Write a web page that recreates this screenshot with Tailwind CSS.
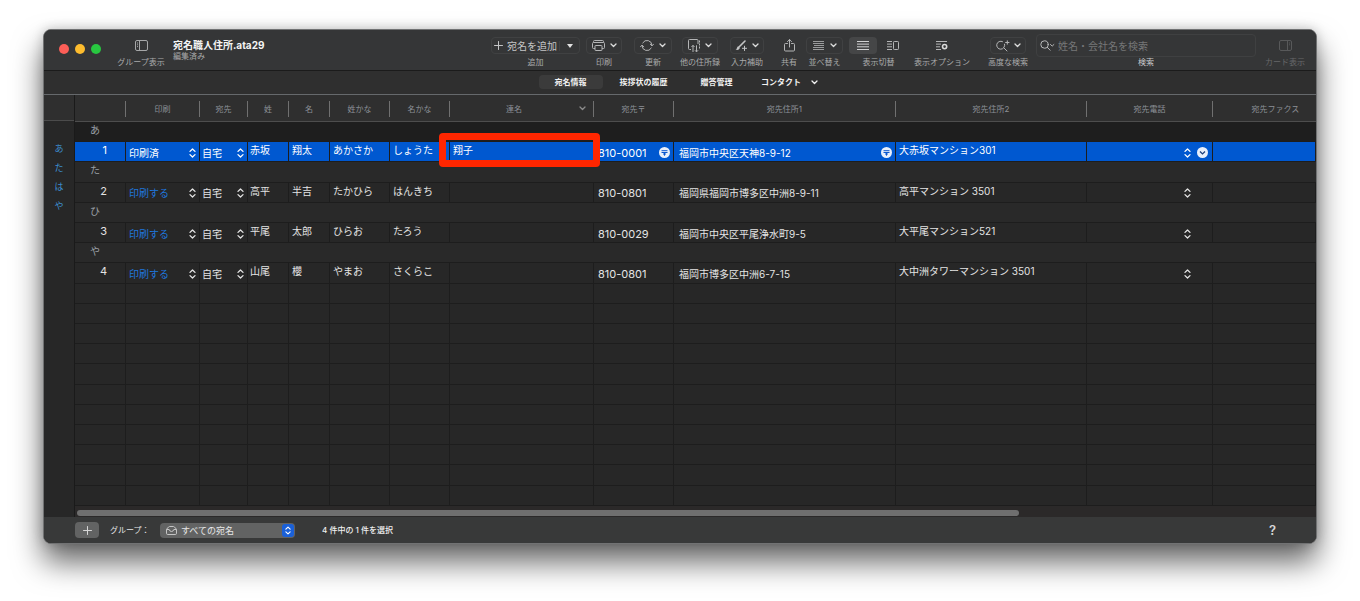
<!DOCTYPE html>
<html lang="ja">
<head>
<meta charset="utf-8">
<meta name="viewport" content="width=device-width, initial-scale=1">
<title>宛名職人住所.ata29</title>
<script src="https://cdn.jsdelivr.net/npm/@tailwindcss/browser@4"></script>
</head>
<body class="flex h-screen flex-col bg-white px-[43px] pt-[29px] pb-[57px] font-['Inter','Noto_Sans_CJK_JP',sans-serif] text-[10px] text-[#e4e4e4]">

<svg class="hidden">
  <symbol id="chev" viewBox="0 0 7 5"><path d="M1 1l2.5 2.5L6 1" fill="none" stroke="currentColor" stroke-width="1.3" stroke-linecap="round" stroke-linejoin="round"/></symbol>
  <symbol id="updown" viewBox="0 0 7 10"><path d="M1 3.4L3.5 1 6 3.4M1 6.6L3.5 9 6 6.6" fill="none" stroke="currentColor" stroke-width="1.3" stroke-linecap="round" stroke-linejoin="round"/></symbol>
</svg>

<div class="flex min-h-0 flex-1 flex-col overflow-hidden rounded-lg border border-[#717273] bg-[#272727] shadow-[0_18px_30px_rgba(0,0,0,0.6),0_0_12px_rgba(0,0,0,0.2)]">

  <header class="flex h-[41px] shrink-0 items-end border-b border-[#1b1b1b] bg-[#353637] pr-[11px] pb-[3px] pl-[15px] text-[8px] leading-[10px] text-[#a9aaab]">
    <div class="flex h-[23px] items-start gap-[6px]">
      <button aria-label="閉じる" class="size-[10px] rounded-full bg-[#fc5e57]"></button>
      <button aria-label="しまう" class="size-[10px] rounded-full bg-[#fdbc2e]"></button>
      <button aria-label="拡大" class="size-[10px] rounded-full bg-[#28c740]"></button>
    </div>
    <button class="ml-4 flex w-12 flex-col items-center gap-[3px] whitespace-nowrap">
      <span class="flex h-[17px] items-center"><svg class="h-[11px] w-[13px]" viewBox="0 0 13 11" fill="none" stroke="#a6a7a8"><rect x=".5" y=".5" width="12" height="10" rx="1.5"/><path d="M4.5.5v10M2 3h1M2 4.8h1M2 6.6h1"/></svg></span>
      グループ表示
    </button>
    <div class="ml-2 w-[318px] pb-[5px]">
      <h1 class="text-[10px] leading-3 font-bold whitespace-nowrap text-[#f4f4f4]">宛名職人住所.ata29</h1>
      <p class="leading-[11px]">編集済み</p>
    </div>

    <div class="flex w-[89px] flex-col items-center gap-[3px]">
      <div class="flex h-[17px] w-full items-center rounded border border-[#404142] text-[10px] text-[#c4c5c6]">
        <button class="flex flex-1 items-center justify-center gap-1 border-r border-[#404142] whitespace-nowrap">
          <svg class="size-[9px]" viewBox="0 0 9 9" stroke="currentColor" stroke-linecap="round"><path d="M4.5.5v8M.5 4.5h8"/></svg>宛名を追加
        </button>
        <button aria-label="追加メニュー" class="flex w-[19px] justify-center"><svg class="h-1 w-[6px]" viewBox="0 0 6 4" fill="#e2e2e2"><path d="M0 0h6L3 4z"/></svg></button>
      </div>
      追加
    </div>
    <button class="ml-[6px] flex w-9 flex-col items-center gap-[3px]">
      <span class="flex h-[17px] w-full items-center justify-center gap-[5px] rounded border border-[#404142]">
        <svg class="h-[11px] w-[13px]" viewBox="0 0 13 11" fill="none" stroke="#b4b5b6"><path d="M1.5 2.500V1.500a1 1 0 0 1 1-1h8a1 1 0 0 1 1 1v1M3 8.500H1.500a1 1 0 0 1-1-1V3.500a1 1 0 0 1 1-1h10a1 1 0 0 1 1 1v4a1 1 0 0 1-1 1H10"/><rect x="3" y="5.500" width="7" height="5" rx=".6"/></svg>
        <svg class="h-[5px] w-[7px] text-[#dcdcdc]"><use href="#chev"/></svg>
      </span>
      印刷
    </button>
    <button class="ml-3 flex w-[38px] flex-col items-center gap-[3px]">
      <span class="flex h-[17px] w-full items-center justify-center gap-[5px] rounded border border-[#404142]">
        <svg class="h-[13px] w-[14px]" viewBox="0 0 14 13" fill="none" stroke="#b4b5b6" stroke-linecap="round" stroke-linejoin="round"><path d="M2.700 3.900A5 5 0 0 1 12 6.500M11.300 9.100A5 5 0 0 1 2 6.500"/><path d="M10.300 5.200L12 6.900l1.500-1.700M.5 7.800L2 6.100l1.700 1.700"/></svg>
        <svg class="h-[5px] w-[7px] text-[#dcdcdc]"><use href="#chev"/></svg>
      </span>
      更新
    </button>
    <button class="ml-2 flex w-10 flex-col items-center gap-[3px] whitespace-nowrap">
      <span class="flex h-[17px] w-[36px] items-center justify-center gap-[5px] rounded border border-[#404142]">
        <svg class="h-[14px] w-3" viewBox="0 0 12 14" fill="none" stroke="#b4b5b6" stroke-linejoin="round"><path d="M3 10.500H1.500a1 1 0 0 1-1-1v-8a1 1 0 0 1 1-1h7.500a1 1 0 0 1 1 1V5"/><path d="M11.500 1.500v2M11.500 4.500v2M11.500 7.500v2M5 13V6.500M3.500 8L5 6.300 6.500 8M8.500 6.300v6.400M7 11.300l1.500 1.600 1.500-1.600"/></svg>
        <svg class="h-[5px] w-[7px] text-[#dcdcdc]"><use href="#chev"/></svg>
      </span>
      他の住所録
    </button>
    <button class="ml-[10px] flex w-[34px] flex-col items-center gap-[3px] whitespace-nowrap">
      <span class="flex h-[17px] w-full items-center justify-center gap-[5px] rounded border border-[#404142]">
        <svg class="h-[11px] w-3" viewBox="0 0 12 11" fill="none" stroke="#c4c5c6" stroke-linecap="round"><path d="M10 1L4.500 6.500" stroke-width="1.600"/><path d="M3.600 6.300c-1.400.2-1.500 1.500-1.800 2.200-.3.700-.8 1-1.300 1 1.800.9 4.300.4 4.300-1.900z" fill="#c4c5c6" stroke="none"/><path d="M9.500 6.200v4.300M7.400 8.300h4.200"/></svg>
        <svg class="h-[5px] w-[7px] text-[#dcdcdc]"><use href="#chev"/></svg>
      </span>
      入力補助
    </button>
    <button class="ml-[17px] flex w-4 flex-col items-center gap-[3px] whitespace-nowrap">
      <span class="flex h-[17px] items-center"><svg class="h-[13px] w-[11px]" viewBox="0 0 11 13" fill="none" stroke="#b4b5b6" stroke-linecap="round" stroke-linejoin="round"><path d="M3.500 4.500h-2a1 1 0 0 0-1 1v5.500a1 1 0 0 0 1 1h8a1 1 0 0 0 1-1V5.500a1 1 0 0 0-1-1h-2M5.500 8V.7M3.500 2.600l2-2 2 2"/></svg></span>
      共有
    </button>
    <button class="ml-[9px] flex w-[37px] flex-col items-center gap-[3px] whitespace-nowrap">
      <span class="flex h-[17px] w-full items-center justify-center gap-[6px] rounded border border-[#404142]">
        <svg class="h-[9px] w-[11px]" viewBox="0 0 11 9" stroke="#9a9b9c"><path d="M0 .5h11M0 2.500h11M1 4.500h10M0 6.500h11M0 8.500h11"/></svg>
        <svg class="h-[5px] w-[7px] text-[#dcdcdc]"><use href="#chev"/></svg>
      </span>
      並べ替え
    </button>
    <div class="ml-[6px] flex w-[59px] flex-col items-center gap-[3px]">
      <div class="flex h-[17px] w-full">
        <button aria-label="リスト表示" class="flex w-7 items-center justify-center rounded bg-[#454647]"><svg class="h-[9px] w-3" viewBox="0 0 12 9" stroke="#d0d1d2"><path d="M0 .5h12M0 3.100h12M0 5.800h12M0 8.500h12"/></svg></button>
        <button aria-label="カード表示切替" class="flex flex-1 items-center justify-center"><svg class="h-[9px] w-3" viewBox="0 0 12 9" fill="none" stroke="#b4b5b6"><path d="M0 .5h5M0 3.100h5M0 5.800h5M0 8.500h5"/><rect x="6.500" y=".5" width="5" height="8" rx=".8"/></svg></button>
      </div>
      表示切替
    </div>
    <button class="ml-[6px] flex w-14 flex-col items-center gap-[3px] whitespace-nowrap">
      <span class="flex h-[17px] items-center"><svg class="h-[9px] w-3" viewBox="0 0 12 9" fill="none" stroke="#b4b5b6"><path d="M0 .5h11M0 3.100h5M0 5.800h4M0 8.500h5"/><circle cx="8.600" cy="5.600" r="2.100" stroke-width="1.600" stroke="#d8d8d8"/></svg></span>
      表示オプション
    </button>
    <button class="ml-[18px] flex w-10 flex-col items-center gap-[3px] whitespace-nowrap">
      <span class="flex h-[17px] w-9 items-center justify-center gap-1 rounded border border-[#404142]">
        <svg class="h-3 w-[14px]" viewBox="0 0 14 12" fill="none" stroke="#b4b5b6" stroke-linecap="round"><path d="M8.600 4.200A4 4 0 1 1 6.500 1.600M8 8l3 3M11.300.8v3.400M9.600 2.500H13"/></svg>
        <svg class="h-[5px] w-[7px] text-[#dcdcdc]"><use href="#chev"/></svg>
      </span>
      高度な検索
    </button>
    <div class="ml-2 flex min-w-0 flex-1 flex-col items-center text-[#c9cacb]">
      <div class="flex h-[23px] w-full items-center rounded border border-[#3f4041] pl-[3px]">
        <svg class="h-[11px] w-[15px] shrink-0" viewBox="0 0 15 11" fill="none" stroke="#b8b9ba" stroke-linecap="round" stroke-linejoin="round"><circle cx="4.500" cy="4.500" r="3.700"/><path d="M7.300 7.300l2.800 2.900M10.500 4.500l1.700 1.600 1.700-1.600"/></svg>
        <input id="q" type="search" placeholder="姓名・会社名を検索" class="ml-[3px] min-w-0 flex-1 bg-transparent text-[10px] leading-4 placeholder-[#767778] outline-none">
      </div>
      <label for="q">検索</label>
    </div>
    <button class="ml-[9px] flex w-10 flex-col items-center gap-[3px] whitespace-nowrap text-[#67686a]">
      <span class="flex h-[17px] items-center"><svg class="h-[11px] w-[13px]" viewBox="0 0 13 11" fill="none" stroke="#58595a"><rect x=".5" y=".5" width="12" height="10" rx="1.500"/><path d="M8.500.5v10M10 3h1M10 4.800h1"/></svg></span>
      カード表示
    </button>
  </header>

  <nav class="flex h-6 shrink-0 items-center justify-center gap-[9px] border-b border-[#66696c] bg-[#2f2f2f] pb-px text-[8px] font-bold text-[#f2f2f2]">
    <button class="h-[14px] w-16 rounded bg-[#3b3b3b] leading-[14px]">宛名情報</button>
    <button class="h-[14px] w-16 leading-[14px]">挨拶状の履歴</button>
    <button class="h-[14px] w-16 leading-[14px]">贈答管理</button>
    <button class="flex h-[14px] w-16 items-center justify-center gap-[10px] leading-[14px] whitespace-nowrap">コンタクト<svg class="h-[5px] w-[7px]"><use href="#chev"/></svg></button>
  </nav>

  <main class="flex min-h-0 flex-1">
    <aside class="w-[31px] shrink-0 border-r border-[#1a1a1a] bg-[#272727]">
      <div class="h-[26px] border-b border-[#4b4b4b] bg-[#2f2f2f]"></div>
      <nav class="flex flex-col items-center pt-[18px] text-[9px] leading-[19px] text-[#3d8fd0]">
        <a href="#a">あ</a><a href="#ta">た</a><a href="#ha">は</a><a href="#ya">や</a>
      </nav>
    </aside>
    <div class="flex min-w-0 flex-1 flex-col">
      <div class="min-h-0 flex-1">
        <table class="h-full w-full table-fixed border-separate border-spacing-0">
          <colgroup>
            <col class="w-[51px]"><col class="w-[74px]"><col class="w-[48px]"><col class="w-[41px]"><col class="w-[41px]"><col class="w-[60px]"><col class="w-[60px]"><col class="w-[144px]"><col class="w-[80px]"><col class="w-[222px]"><col class="w-[191px]"><col class="w-[126px]"><col>
          </colgroup>
          <thead id="head"></thead>
          <tbody id="rows"></tbody>
        </table>
      </div>
      <div class="h-[11px] shrink-0 bg-[#2b2929] pt-1 pl-[2px]"><div class="h-[6px] w-[76%] rounded-full bg-[#6f6f6f]"></div></div>
    </div>
  </main>

  <footer class="flex h-[26px] shrink-0 items-center bg-[#383939] pr-10 pl-[31px] text-[8px] text-[#e6e6e6]">
    <button aria-label="追加" class="flex h-4 w-6 items-center justify-center rounded bg-[#626363]"><svg class="size-[9px]" viewBox="0 0 9 9" stroke="#d6d6d6" stroke-linecap="round"><path d="M4.500.5v8M.5 4.500h8"/></svg></button>
    <label for="grp" class="ml-[11px] w-[50px] whitespace-nowrap">グループ：</label>
    <div class="flex h-[15px] w-[135px] items-center rounded bg-[#626363] pr-[1px] pl-[6px]">
      <svg class="h-[9px] w-[11px] shrink-0" viewBox="0 0 11 9" fill="none" stroke="#d0d0d0" stroke-width=".9" stroke-linejoin="round"><path d="M.5 3.300L2.500 1Q2.900.5 3.500.5h4q.6 0 1 .5l2 2.300v4q0 1.200-1.200 1.200H1.700Q.5 8.500.5 7.300zM.7 3.500h2.500Q3.600 5.500 5.500 5.500T7.800 3.500h2.500"/></svg>
      <select id="grp" class="ml-1 min-w-0 flex-1 appearance-none bg-transparent text-[9px] leading-[15px]"><option>すべての宛名</option></select>
      <span class="flex h-[13px] w-3 items-center justify-center rounded-[3px] bg-[#1a60d8] text-white"><svg class="h-[9px] w-[6px]"><use href="#updown"/></svg></span>
    </div>
    <p class="ml-[27px] whitespace-nowrap font-medium text-[#f0f0f0]">4 件中の 1 件を選択</p>
    <button aria-label="ヘルプ" class="ml-auto text-[13px] font-semibold leading-4 text-[#d6d6d6]">?</button>
  </footer>
</div>

<script>
  const icon = {
    updown: '<svg class="pointer-events-none h-[10px] w-[7px] shrink-0"><use href="#updown"/></svg>',
    postal: '<button aria-label="郵便番号検索" class="shrink-0"><svg class="size-[11px]" viewBox="0 0 11 11"><circle cx="5.500" cy="5.500" r="5.500" fill="#e8effb"/><path d="M2.500 3.700h6M2.500 5.500h6M5.500 5.500v3.200M4 7h3" stroke="#0a57cf" fill="none"/></svg></button>',
    open: '<button aria-label="電話メニュー" class="shrink-0"><svg class="size-[11px]" viewBox="0 0 11 11"><circle cx="5.500" cy="5.500" r="5.500" fill="#e8effb"/><path d="M3 4.500l2.500 2.400L8 4.500" stroke="#1c3f7c" stroke-width="1.300" fill="none"/></svg></button>'
  };
  const heads = ['', '印刷', '宛先', '姓', '名', '姓かな', '名かな', '連名', '宛先〒', '宛先住所1', '宛先住所2', '宛先電話', '宛先ファクス'];
  document.getElementById('head').innerHTML = '<tr>' + heads.map((h, i) =>
    '<th class="h-[27px] border-b border-[#4d4d4d] bg-[#2f2f2f] p-0 pt-px text-[8px] font-normal text-[#8c9097]">' +
    (i === 12
      ? '<div class="flex h-4 items-center justify-center pl-[22px] whitespace-nowrap">' + h + '</div>'
      : '<div class="flex h-4 items-center justify-center border-r border-[#707070]' + (i === 7 ? ' pr-[7px] pl-[56px]' : '') + '">' +
        (i === 7 ? '<span class="flex-1 text-left">' + h + '</span><svg class="h-[5px] w-[7px] text-[#8c8c8c]"><use href="#chev"/></svg>' : h) + '</div>') +
    '</th>').join('') + '</tr>';

  const group = (k, id, first) =>
    '<tr id="' + id + '"><td colspan="13" class="h-5 border-b border-[#1d1d1d] p-0 pl-[15px] align-top leading-4 text-[#9ba0a6] ' + (first ? 'bg-[#1e1e1e]' : 'bg-[#292929]') + '"><div class="h-4">' + k + '</div></td></tr>';
  const cell = (html, pad) => '<td class="relative h-5 border-r border-b border-[#1d1d1d] p-0 align-top leading-4 whitespace-nowrap ' + (pad || 'pl-[3px]') + '">' + html + '</td>';
  const pick = (v, name, tone) => '<div class="flex h-[19px] items-center pt-[2px] pr-[3px]"><select aria-label="' + name + '" class="min-w-0 flex-1 appearance-none bg-transparent leading-4 ' + tone + '"><option>' + v + '</option></select>' + icon.updown + '</div>';
  const line = (v, extra) => '<div class="flex h-[19px] items-center justify-between pt-[2px] pr-[3px]"><span>' + v + '</span>' + extra + '</div>';
  const mark = '<span class="pointer-events-none absolute -top-[9px] -right-[7px] -bottom-[6px] -left-[11px] z-10 rounded-sm border-[7px] border-[#ff2600]"></span>';
  const row = (r, sel) =>
    '<tr class="' + (sel ? 'bg-[#0058d0] text-white' : 'bg-[#272727]') + '">' +
    cell('<div class="pr-[18px] text-right text-[11px]">' + r[0] + '</div>') +
    cell(pick(r[1], '印刷', sel ? 'text-white' : 'text-[#1f76dc]')) +
    cell(pick('自宅', '宛先', ''), 'pl-[2px]') +
    cell(r[2], 'pl-[2px]') + cell(r[3]) + cell(r[4]) + cell(r[5]) +
    cell(r[6] + (sel ? mark : '')) +
    cell(line(r[7], sel ? icon.postal : ''), 'pl-1 text-[11px]') +
    cell(line(r[8], sel ? icon.postal : ''), 'pl-[5px]') +
    cell(r[9], 'pl-[3px]') +
    cell('<div class="flex h-[19px] items-center gap-[6px] pt-[2px] pl-[94px]">' + icon.updown + (sel ? icon.open : '') + '</div>') +
    cell('') + '</tr>';

  let body = group('あ', 'a', true) + row(['1', '印刷済', '赤坂', '翔太', 'あかさか', 'しょうた', '翔子', '810-0001', '福岡市中央区天神8-9-12', '大赤坂マンション301'], true);
  body += group('た', 'ta') + row(['2', '印刷する', '高平', '半吉', 'たかひら', 'はんきち', '', '810-0801', '福岡県福岡市博多区中洲8-9-11', '高平マンション 3501']);
  body += group('ひ', 'ha') + row(['3', '印刷する', '平尾', '太郎', 'ひらお', 'たろう', '', '810-0029', '福岡市中央区平尾浄水町9-5', '大平尾マンション521']);
  body += group('や', 'ya') + row(['4', '印刷する', '山尾', '櫻', 'やまお', 'さくらこ', '', '810-0801', '福岡市博多区中洲6-7-15', '大中洲タワーマンション 3501']);
  for (let i = 0; i < 11; i++) body += '<tr>' + Array(13).fill('<td class="h-5 border-r border-b border-[#1d1d1d] p-0"></td>').join('') + '</tr>';
  document.getElementById('rows').innerHTML = body;
</script>
</body>
</html>
